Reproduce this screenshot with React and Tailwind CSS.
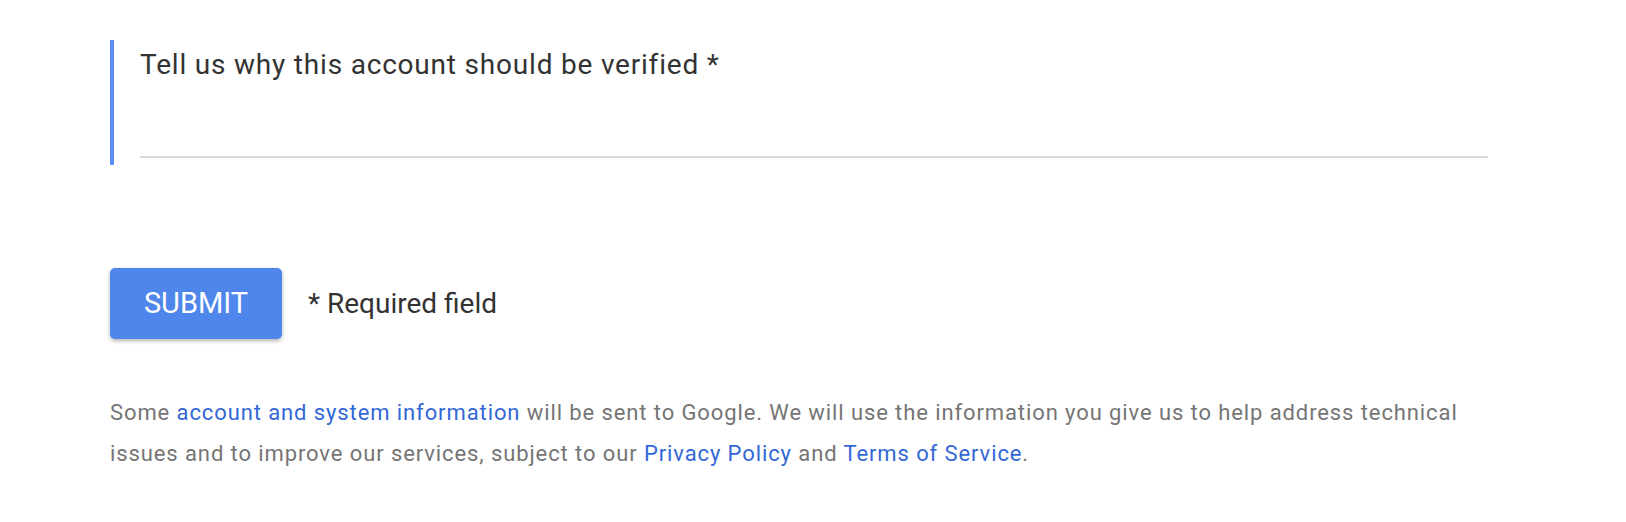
import React from 'react';

export default function App() {
  return (
    <div className="min-h-[522px] bg-white pl-[110px] pt-[40px]" style={{ fontFamily: 'Roboto, "Noto Sans", Arial, sans-serif' }}>
      {/* Question block */}
      <div className="flex h-[125px] w-[1378px] flex-col border-l-4 border-[#5b8ff9] pl-[26px]">
        <label className="mt-[8px] text-[28px] leading-[33px] tracking-[0.8px] text-[#333333]">
          Tell us why this account should be verified *
        </label>
        <div className="mb-[7px] mt-auto w-[1348px] border-b-2 border-[#dadada]">
          <input className="h-[38px] w-full bg-transparent text-[20px] text-[#333] outline-none" />
        </div>
      </div>

      {/* Submit row */}
      <div className="mt-[103px] flex items-center gap-[26px]">
        <button className="h-[71px] w-[172px] rounded-[5px] bg-[#4f86ec] text-[29px] text-white shadow-[0_2px_4px_rgba(0,0,0,0.3)]">
          SUBMIT
        </button>
        <span className="text-[28px] text-[#333333]">* Required field</span>
      </div>

      {/* Footer */}
      <p className="mt-[53px] w-[1380px] text-[22px] leading-[41px] tracking-[0.9px] text-[#757575]">
        Some <a className="text-[#3367d6]">account and system information</a> will be sent to Google. We will use the information you give us to help address technical issues and to improve our services, subject to our{' '}
        <a className="text-[#3367d6]">Privacy Policy</a> and <a className="text-[#3367d6]">Terms of Service</a>.
      </p>
    </div>
  );
}
